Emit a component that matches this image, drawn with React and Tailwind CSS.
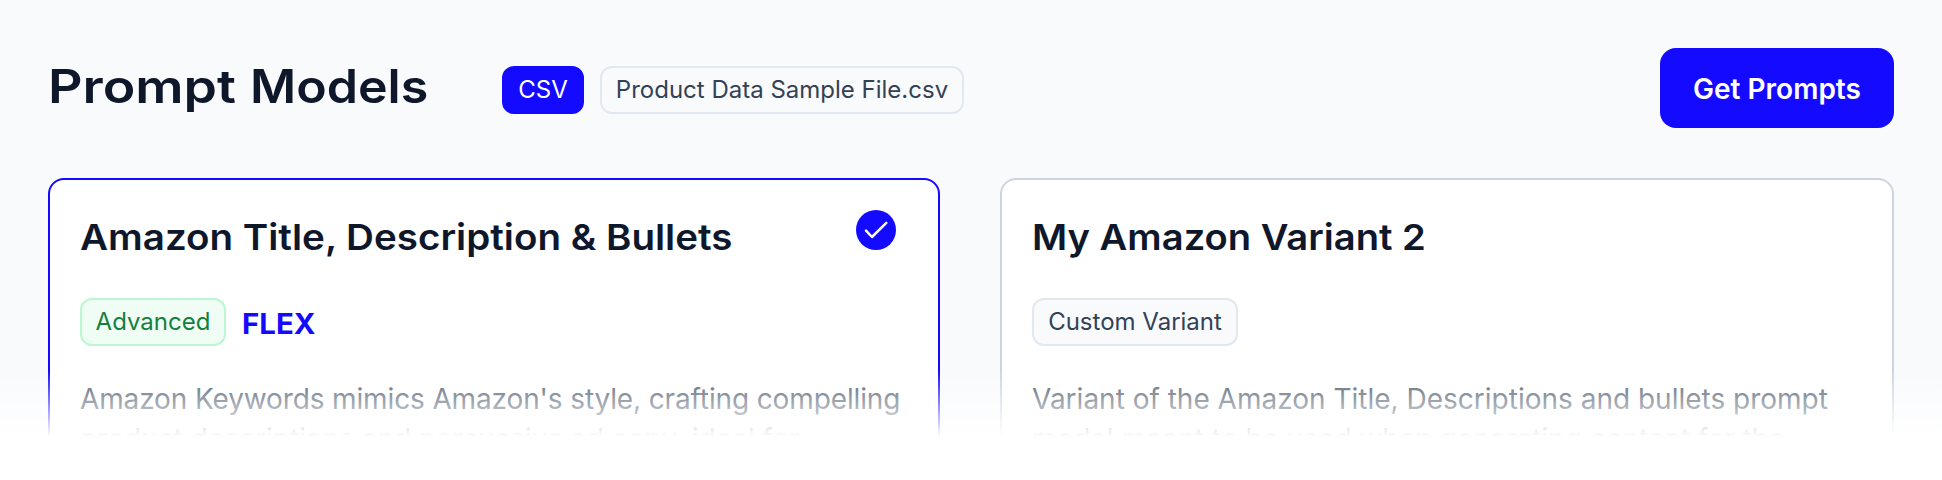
const badgeBase =
  "flex h-12 items-center justify-center rounded-xl border-2 text-2xl whitespace-nowrap";

function CheckBadge() {
  return (
    <svg className="size-10" viewBox="0 0 40 40" fill="none">
      <circle cx="20" cy="20" r="20" fill="#140aff" />
      <path d="M10 20.7 16 27 30.3 12.9" stroke="#fff" strokeWidth="2.5" strokeLinecap="round" strokeLinejoin="round" />
    </svg>
  );
}

function CardTitle({ className, children }) {
  return (
    <h2 className={`mt-[4px] h-12 origin-left text-[35.5px] leading-[48px] font-semibold whitespace-nowrap text-[#0f172a] ${className}`}>
      {children}
    </h2>
  );
}

function Card({ className, title, selected, badges, lines }) {
  return (
    <article className={`h-[320px] rounded-2xl border-2 bg-white px-[30px] pt-[30px] ${className}`}>
      <div className="flex items-start justify-between pr-[12px]">
        {title}
        {selected && <CheckBadge />}
      </div>
      <div className="mt-9 flex h-12 items-center">{badges}</div>
      <div className="mt-[33px] text-[28px] leading-[40px] whitespace-nowrap text-[#475569]">{lines}</div>
    </article>
  );
}

export default function App() {
  return (
    <div className="h-[480px] w-[1942px] overflow-hidden bg-white font-['Inter',sans-serif]">
      <main className="relative h-[436px] overflow-hidden bg-[#f8fafc] px-12 pt-12">
        <header className="flex h-20 items-start">
          <h1 className="mt-[8px] flex w-[454px] text-[46.5px] leading-[60px] font-semibold whitespace-nowrap text-[#0f172a]">
            <span className="w-[202px] origin-left scale-x-[1.153]">Prompt </span>
            <span className="origin-left scale-x-[1.077]">Models</span>
          </h1>
          <div className="mt-[18px] flex gap-4">
            <span className={`${badgeBase} w-[82px] border-[#140aff] bg-[#140aff] text-white`}>CSV</span>
            <span className={`${badgeBase} w-[364px] border-[#e2e8f0] bg-[#f8fafc] text-[#334155]`}>
              Product Data Sample File.csv
            </span>
          </div>
          <button className="ml-auto h-20 w-[234px] rounded-2xl bg-[#140aff] pt-px text-[28px] font-semibold whitespace-nowrap text-white">
            Get Prompts
          </button>
        </header>
        <section className="mt-[50px] flex justify-between">
          <Card
            className="w-[892px] border-[#140aff]"
            selected
            title={<CardTitle className="scale-x-[1.086]">Amazon Title, Description &amp; Bullets</CardTitle>}
            badges={
              <>
                <span className={`${badgeBase} w-[146px] border-[#bbf7d0] bg-[#f0fdf4] text-[#15803d]`}>Advanced</span>
                <span className="ml-4 origin-left scale-x-105 pt-[3px] text-[28px] font-bold text-[#140aff]">FLEX</span>
              </>
            }
            lines={
              <>
                <p className="tracking-[-0.13px]">Amazon Keywords mimics Amazon's style, crafting compelling</p>
                <p>product descriptions and persuasive ad copy, ideal for</p>
              </>
            }
          />
          <Card
            className="w-[894px] border-[#cbd5e1]"
            title={<CardTitle className="scale-x-[1.075]">My Amazon Variant 2</CardTitle>}
            badges={
              <span className={`${badgeBase} w-[206px] border-[#e2e8f0] bg-[#f8fafc] text-[#334155]`}>Custom Variant</span>
            }
            lines={
              <>
                <p>Variant of the Amazon Title, Descriptions and bullets prompt</p>
                <p>model meant to be used when generating content for the</p>
              </>
            }
          />
        </section>
        <div className="absolute inset-x-0 -bottom-px h-[67px] bg-linear-to-b from-white/0 to-white" />
      </main>
    </div>
  );
}
